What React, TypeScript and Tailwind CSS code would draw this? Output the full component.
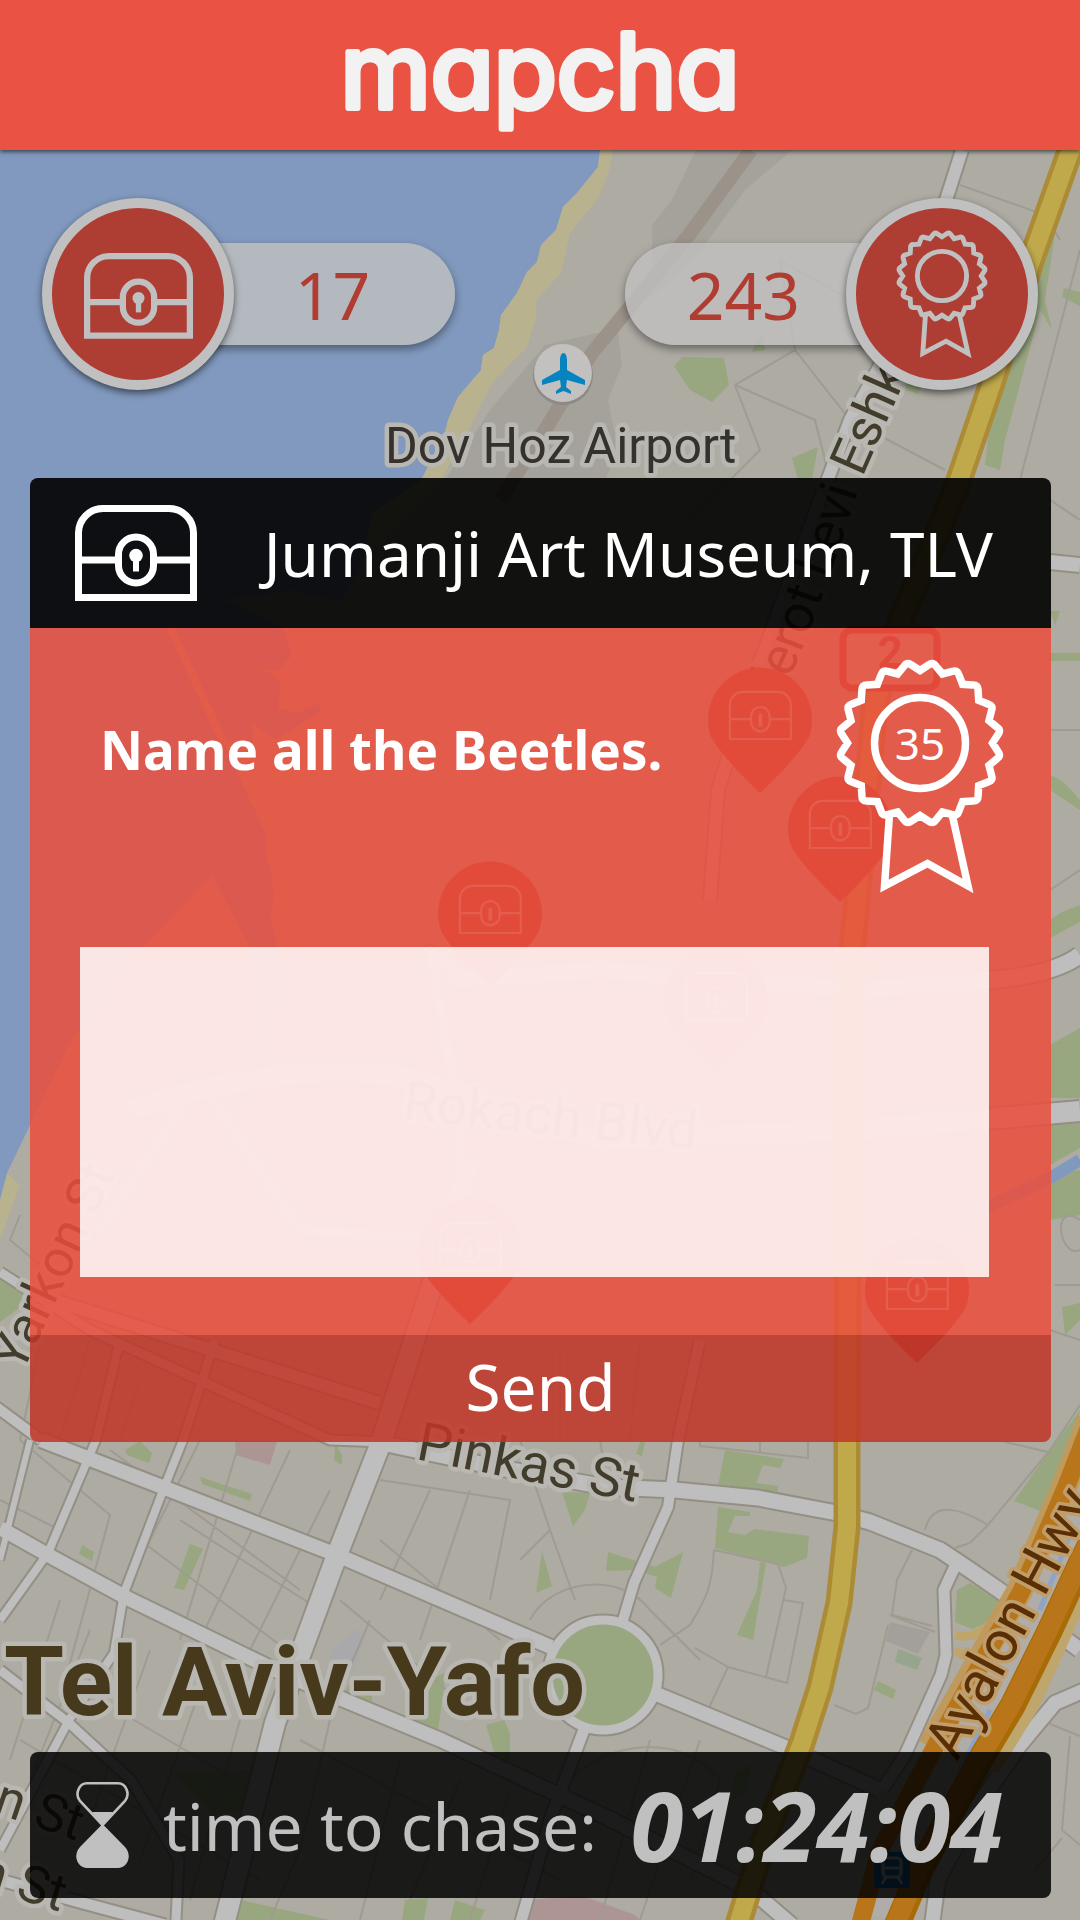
const RED = "#ea5344";

function ChestIcon({ className }: { className?: string }) {
  return (
    <svg viewBox="0 0 122 96" className={className} fill="none" stroke="currentColor" strokeWidth="7" aria-hidden="true">
      <path d="M3.5 92.5V28A24.5 24.5 0 0 1 28 3.5h66A24.5 24.5 0 0 1 118.500 28v64.500z" />
      <path d="M3.500 55H42M80 55h38.500" />
      <rect x="43.500" y="32" width="35" height="46" rx="17.500" />
      <circle cx="61" cy="50.500" r="6.800" fill="currentColor" stroke="none" />
      <path d="M58 54h6v12.500h-6z" fill="currentColor" stroke="none" />
    </svg>
  );
}

const CX = 99;
const CY = 102;
function at(radius: number, degrees: number) {
  const a = (degrees * Math.PI) / 180;
  return `${(CX + radius * Math.sin(a)).toFixed(1)} ${(CY - radius * Math.cos(a)).toFixed(1)}`;
}
const scallops =
  Array.from({ length: 20 }, (_, i) => {
    const s = i * 18;
    return `${i === 0 ? "M" : "L"}${at(72.5, s)}L${at(78.5, s + 6.3)}Q${at(82.5, s + 9)} ${at(78.5, s + 11.7)}`;
  }).join("") + "Z";

function BadgeIcon({ className, weight = 7.5 }: { className?: string; weight?: number }) {
  return (
    <svg viewBox="14 17 170 237" className={className} fill="none" stroke="currentColor" strokeWidth={weight} aria-hidden="true">
      <path d={scallops} />
      <circle cx={CX} cy={CY} r="45.500" />
      <path d="M68.500 173L63.500 245L106.500 222.500L147 245L131 173" />
    </svg>
  );
}

function HourglassIcon({ className }: { className?: string }) {
  return (
    <svg viewBox="0 0 53 86" className={className} fill="currentColor" aria-hidden="true">
      <path
        d="M11 1.300H42C50 1.300 54.500 12 49 19L26.500 43L4 19C-1.500 12 3 1.300 11 1.300Z"
        fill="none"
        stroke="currentColor"
        strokeWidth="2.600"
      />
      <path d="M16 30H37L26.500 43Z" />
      <path d="M26.500 42L49 65C57 74 51 86 42 86H11C2 86 -4 74 4 65Z" />
    </svg>
  );
}

const pins = [
  [760, 719],
  [840, 828],
  [490, 913],
  [716, 1000],
  [470, 1250],
  [917, 1289],
];

const minorStreets =
  "M960 185L1045 215L1060 240M1045 215L1035 260M780 260L850 300L880 350M780 260L795 350L735 385L760 450L690 520M795 350L850 420L945 470M735 385L815 420L830 480M1080 250L1020 480" +
  "M0 1500L60 1530M20 1440L110 1515L60 1700M110 1450L300 1590M200 1440L120 1600M240 1440L180 1640M290 1450L200 1640M330 1490L230 1690M140 1540L300 1660M180 1520L320 1610M60 1600L10 1760M90 1630L30 1780M150 1650L90 1820M200 1690L140 1860M240 1720L190 1900M20 1740L260 1880M100 1700L270 1800" +
  "M380 1480L510 1500L490 1600M430 1490L380 1600M380 1540L500 1640M470 1490L420 1640M340 1600L470 1710M370 1620L340 1690M520 1440L550 1530L520 1560M550 1530L575 1600M530 1620C550 1580 620 1570 650 1610L700 1660M700 1440V1446L808 1458V1440M760 1440V1452M714 1550L778 1564L786 1588L766 1677M783 1600L803 1603L787 1683L728 1667L695 1648M728 1667L708 1710M714 1550C712 1590 705 1600 690 1625L660 1645" +
  "M300 1740L560 1880M330 1720L300 1850L270 1920M400 1760L360 1920M460 1780L410 1900M510 1790L470 1920M560 1790C600 1740 680 1730 720 1780L690 1880M650 1740L600 1920M700 1740L640 1920M912 1550L897 1580L892 1615L932 1626M925 1530C932 1500 960 1508 988 1525L1050 1450L1080 1405M988 1525L970 1543L955 1548M890 1615L935 1632M834 1705L856 1714L868 1708L888 1625" +
  "M20 1215L10 1240L40 1265M1080 1220C1050 1200 1060 1260 1080 1250M1055 1285H1080M1050 730H1080M1050 500L1080 520M1080 870L1050 890M1050 1330L1080 1340M1005 1442L1048 1452M1050 1724L1080 1736M1070 1736L1062 1830L1080 1845M1062 1838L1035 1870" +
  "M50 1300L20 1440M90 1340L60 1440M140 1380L120 1440M600 1440L610 1500M640 1340L630 1440M560 1350V1440";

const streets: [string, number][] = [
  ["M962 150L947 197L905 320L850 420L790 580L750 690L718 790L710 900", 12],
  ["M0 1272L90 1330L330 1440L386 1442", 9],
  ["M31 1293L379 1403", 12],
  ["M41 1440L165 1488L337 1555L551 1647", 14],
  ["M41 1440L-20 1395", 10],
  ["M0 1528L48 1555L127 1598L269 1667L344 1700L441 1740L606 1817L751 1890L792 1925", 14],
  ["M470 1160L440 1260L382 1440L337 1555L275 1723L224 1925", 20],
  ["M120 1340L96 1440L48 1553L0 1620", 8],
  ["M30 1440L0 1560", 6],
  ["M215 1340L183 1440L162 1493L124 1593L114 1653L69 1720L0 1850", 8],
  ["M0 1670L69 1723L131 1780L179 1860L176 1920", 9],
  ["M382 1443L500 1468L606 1487L675 1490L758 1498L837 1513L870 1522L940 1550L970 1570L1006 1595L1080 1650", 15],
  ["M956 1564L944 1590L946 1655L941 1675L905 1755L882 1790", 11],
  ["M700 1340L678 1440L668 1507L634 1583L623 1620", 10],
  ["M654 1693L792 1750L880 1790", 14],
  ["M585 1727L551 1817L520 1925", 11],
  ["M0 1880L83 1903L165 1925", 11],
  ["M1085 1690L1055 1703L1020 1745L975 1810L938 1880L932 1925", 14],
  ["M1050 562L1080 565", 14],
  ["M1080 955C1040 985 960 980 860 990L600 970L450 980", 16],
  ["M1080 1111C1000 1118 920 1125 850 1130L600 1140L420 1080C330 1060 220 1080 130 1110", 20],
  ["M470 980L430 950L460 1120L465 1240L300 1230L200 1080L100 1230", 9],
];

const avenue =
  "M1074 140L1033 255L992 383L959 480L943 520L902 617L875 703L857 900L852 950L848 1130L847 1440L847 1527L839 1603L820 1687L802 1743L764 1840L738 1925";

function MapView() {
  return (
    <svg
      className="absolute inset-0 h-full w-full"
      viewBox="0 0 1080 1920"
      preserveAspectRatio="xMidYMin slice"
      role="img"
      aria-label="Map of Tel Aviv-Yafo"
    >
      <rect width="1080" height="1920" fill="#aeaba3" />
      <path
        d="M0 0H600V150L598 167L577 193L563 207L556 230L541 245L537 262L527 272L517 293L501 315L499 330L494 348L483 355L481 370L458 397L448 420L444 437L421 480L372 513L360 570L340 602L290 590L225 600L282 627L292 655L278 670L233 670L267 671L280 682L278 708L297 713L320 703V712L290 760L267 770V837L265 853L275 887L270 917L278 947L282 990L255 1080H240L262 1000L250 947L212 875L143 947L69 1043L31 1123L7 1173L12 1185L0 1200Z"
        fill="#8199be"
      />
      <path d="M170 627L225 745" fill="none" stroke="#b4b09f" strokeWidth="8" />
      <path d="M222 740L253 745V723L275 740L320 712L300 947H280L267 837Z" fill="#b4b09f" />
      <path
        d="M600 150L598 167L577 193L563 207L556 230L541 245L537 262L527 272L517 293L501 315L499 330L494 348L483 355L481 370L458 397L448 420L444 437L421 480L372 513L365 560L395 530L441 480L475 417L492 383L527 347L536 317L536 300L561 273L570 233L599 197L609 170L613 150Z"
        fill="#b9b28f"
      />
      <path d="M7 1173L20 1185L0 1240V1200Z" fill="#b9b28f" />
      <path d="M696 150L672 200L652 225L652 280L610 330L545 345L490 410L445 480H605L618 450L608 400L622 365L617 325L690 265L745 190L792 150Z" fill="#a5a29c" />
      <path d="M751 150L689 235L592 353L545 430L500 500" fill="none" stroke="#9b9389" strokeWidth="14" />

      <g fill="#98a780">
        <path d="M674 366L682 357L724 358L729 385L712 402L690 390ZM755 343L763 335L765 350L752 352ZM792 458L818 447L812 480H798ZM1080 150L1060 200L1045 300L1052 330L1040 310L1005 440L1000 470L985 465L990 420L1010 350L1060 150ZM905 385L925 380L918 394L906 390Z" />
        <path d="M1064 288L1080 292V306L1062 297ZM1050 611H1060L1055 625ZM1050 653H1080V661H1050ZM1050 775C1065 780 1075 795 1080 800V810L1050 790ZM1050 920L1062 912L1080 905V922L1050 938ZM1080 1028V1098H1050V1045ZM1050 1122L1080 1116V1148L1050 1165ZM1050 1175L1080 1170V1215L1050 1220ZM1062 1307L1080 1303V1320L1065 1335ZM0 1272L30 1300L0 1322Z" />
        <path d="M125 1450L140 1441L152 1453L149 1463L127 1455ZM200 1477L252 1494L250 1501L202 1484ZM82 1545L94 1552L92 1561L79 1554ZM190 1544L203 1549L184 1590L174 1588ZM335 1443L342 1455V1465L334 1460ZM640 1442H645L642 1456L636 1454ZM725 1450L784 1459L780 1468L763 1465L756 1483L778 1486V1492L718 1486ZM718 1507L750 1512V1516L735 1516L728 1532L745 1535L755 1529L809 1536L807 1558L784 1567L715 1548ZM760 1562L766 1563L753 1640L737 1635L757 1590ZM562 1492L590 1493L585 1510L573 1526ZM542 1551L552 1586L536 1593ZM608 1552L655 1567L683 1552L671 1598L655 1588L657 1577L636 1570L606 1571ZM957 1590L970 1583L999 1601L990 1622L972 1629L955 1622Z" />
        <path d="M1080 1410L1070 1470L1043 1512L1014 1501L1050 1450ZM878 1681L896 1690L893 1699L874 1690ZM355 1675L372 1680V1708L338 1702ZM430 1680L446 1672L436 1745L413 1725ZM486 1725L504 1720L510 1733V1772H500ZM240 1900L330 1920H235ZM405 1900L428 1898L424 1920H402ZM455 1900L485 1910L480 1920H450ZM175 1772L267 1770V1805L212 1815ZM735 1772L752 1765L745 1795L730 1800ZM560 1470L578 1475L572 1485Z" />
      </g>
      <path d="M898 1649L922 1658L917 1670L895 1662Z" fill="#96a58d" />
      <g fill="#a9a8aa">
        <path d="M342 1640L355 1630L366 1635L358 1660L350 1675L328 1668L332 1650Z" />
        <path d="M890 1622L930 1632L918 1654L886 1641Z" fill="#a3a09b" />
        <path d="M1035 1690L1042 1660L1020 1715L1015 1730Z" />
      </g>
      <path d="M235 1440L277 1441L270 1465L236 1455ZM530 1900L580 1895L635 1915L640 1920H520Z" fill="#ad9594" />
      <path d="M1080 1160L1052 1177L960 1220" fill="none" stroke="#8199be" strokeWidth="12" />

      <path d={minorStreets} fill="none" stroke="#9f9b93" strokeWidth="2" />
      <g fill="none" stroke="#948f85" strokeLinejoin="round">
        {streets.map(([d, w]) => (
          <path key={d} d={d} strokeWidth={w + 4} />
        ))}
        <circle cx="603" cy="1675" r="55" strokeWidth="13" />
      </g>
      <g fill="none" stroke="#bebebe" strokeLinejoin="round">
        {streets.map(([d, w]) => (
          <path key={d} d={d} strokeWidth={w} />
        ))}
        <circle cx="603" cy="1675" r="55" strokeWidth="9" fill="#98a780" />
      </g>

      <g fill="none" strokeLinejoin="round">
        <path d={avenue} stroke="#ac8b37" strokeWidth="27" />
        <path d={avenue} stroke="#bfa94b" strokeWidth="18" />
        <path d="M955 1635C975 1640 985 1630 1005 1610M955 1650L980 1665" stroke="#c0a56a" strokeWidth="9" />
        <path d="M1085 1560L1058 1627L1025 1700L985 1765" stroke="#bfa66c" strokeWidth="32" />
        <path d="M1082 1500L1045 1600L960 1755L885 1920" stroke="#b0aca8" strokeWidth="30" />
        <path d="M1072 1530L1040 1610M990 1710L960 1770" stroke="#8fa3c4" strokeWidth="5" />
        <path d="M1090 1420L1064 1487L1020 1590L930 1747" stroke="#bf9a5c" strokeWidth="26" />
        <path d="M1090 1545L1080 1565L1050 1630L1013 1705L983 1755L920 1870L897 1925" stroke="#a96b06" strokeWidth="26" />
        <path d="M1088 1545L1078 1565L1048 1630L1011 1705L981 1755L918 1870L895 1925" stroke="#b87519" strokeWidth="20" />
        <path d="M1092 1420L1066 1487L1022 1590L935 1747L880 1850L860 1925" stroke="#b87519" strokeWidth="18" />
      </g>

      <g>
        <rect x="843" y="630" width="94" height="58" rx="9" fill="#c0beb9" stroke="#b2302a" strokeWidth="7" />
        <text x="890" y="668" textAnchor="middle" fontSize="44" fontWeight="700" fill="#b2302a" fontFamily="Roboto, sans-serif">
          2
        </text>
      </g>

      <circle cx="563" cy="375" r="30" fill="#8d8a85" />
      <circle cx="563" cy="373" r="29" fill="#c2c1bf" />
      <path d="M563.500 353C566 353 567 357 567 360V370L585 380V385L567 380L566 387L571 391V394L563.500 391L556 394V391L561 387L560 380L542 385V380L560 370V360C560 357 561 353 563.500 353Z" fill="#0784bf" />

      <rect x="874" y="1852" width="36" height="36" rx="4" fill="#0b6fae" />
      <rect x="883" y="1858" width="18" height="19" rx="4" fill="none" stroke="#c0c0c0" strokeWidth="3" />
      <path d="M883 1868H901M886 1877L882 1884M898 1877L902 1884" stroke="#c0c0c0" strokeWidth="3" />

      <defs>
        <path id="levi-eshkol" d="M764 735L800 655C825 590 843 540 862 478L903 385L960 250" />
      </defs>
      <g fontFamily="Roboto, sans-serif" fill="#423c2c" stroke="#b9b7b1" strokeWidth="9" strokeLinejoin="round" paintOrder="stroke">
        <text x="385" y="463" fontSize="50" fill="#35322d">
          Dov Hoz Airport
        </text>
        <text x="4" y="1715" fontSize="97" fontWeight="700" fill="#46391c">
          Tel Aviv-Yafo
        </text>
        <text transform="translate(415 1459) rotate(11)" fontSize="54">
          Pinkas St
        </text>
        <text transform="translate(402 1119) rotate(6)" fontSize="54">
          Rokach Blvd
        </text>
        <text transform="translate(22 1374) rotate(-65)" fontSize="52">
          Yarkon St
        </text>
        <text transform="translate(-36 1802) rotate(19)" fontSize="52">
          on St
        </text>
        <text transform="translate(-54 1877) rotate(17)" fontSize="52">
          on St
        </text>
        <text transform="translate(957 1762) rotate(-62)" fontSize="57" fill="#5a2f06" stroke="#c09e6c" strokeWidth="7">
          Ayalon Hwy
        </text>
        <text fontSize="53">
          <textPath href="#levi-eshkol">Sderot Levi Eshkol</textPath>
        </text>
      </g>

      {pins.map(([x, y]) => (
        <g key={`${x}-${y}`} transform={`translate(${x} ${y})`}>
          <path d="M-49 18A52 52 0 1 1 49 18Q38 38 0 74Q-38 38 -49 18Z" fill="#b23a30" />
          <g transform="translate(-32 -29) scale(0.53)" fill="none" stroke="#c0c0c0" strokeWidth="4">
            <path d="M3.500 92.500V28A24.500 24.500 0 0 1 28 3.500h66A24.500 24.500 0 0 1 118.500 28v64.500z" />
            <path d="M3.500 55H42M80 55h38.500" />
            <rect x="43.500" y="32" width="35" height="46" rx="17.500" />
            <path d="M61 48V66" strokeWidth="7" strokeLinecap="round" />
          </g>
        </g>
      ))}
    </svg>
  );
}

function Logo() {
  return (
    <h1 className="flex">
      <svg viewBox="0 0 420 120" className="h-[120px] w-[420px] overflow-visible" role="img" aria-label="mapcha">
        <text
          x="210"
          y="93"
          textAnchor="middle"
          fontFamily="Inter, sans-serif"
          fontSize="103"
          fontWeight="400"
          fill="#f2f2f2"
          stroke="#f2f2f2"
          strokeWidth="6"
          strokeLinejoin="round"
          style={{ fontFeatureSettings: '"cv11"' }}
        >
          mapcha
        </text>
      </svg>
    </h1>
  );
}

const circle =
  "relative z-10 flex size-[192px] shrink-0 items-center justify-center rounded-full border-[10px] border-[#c0c0c0] bg-[#ae3d33] text-[#c0c0c0] shadow-[0_3px_7px_rgba(0,0,0,0.55)]";
const pill =
  "flex h-[102px] w-[245px] items-center justify-center bg-[#c0c0c0]/80 text-[66px] leading-none text-[#b03c32] shadow-[0_4px_8px_rgba(0,0,0,0.4)]";

export default function App() {
  return (
    <div className="relative flex min-h-screen flex-col overflow-hidden font-['Noto_Sans',sans-serif]">
      <MapView />

      <header
        className="relative flex h-[150px] items-center justify-center shadow-[0_2px_4px_rgba(0,0,0,0.55)]"
        style={{ backgroundColor: RED }}
      >
        <Logo />
      </header>

      <main className="relative flex grow flex-col">
        <section className="flex justify-between px-[42px] pt-12" aria-label="Score">
          <div className="flex items-center">
            <div className={circle}>
              <ChestIcon className="mt-1 w-[109px]" />
            </div>
            <span className={`${pill} -ml-6 rounded-r-full`}>17</span>
          </div>
          <div className="flex items-center">
            <span className={`${pill} -mr-6 rounded-l-full pr-2`}>243</span>
            <div className={circle}>
              <BadgeIcon className="w-[92px]" weight={9} />
            </div>
          </div>
        </section>

        <form className="mt-[88px] mr-[29px] ml-[30px] overflow-hidden rounded-lg text-white" onSubmit={(e) => e.preventDefault()}>
          <div className="flex h-[150px] items-center justify-between bg-black/90 pr-[58px] pl-[45px]">
            <ChestIcon className="w-[122px]" />
            <h2 className="text-[62px] leading-none whitespace-nowrap">Jumanji Art Museum, TLV</h2>
          </div>

          <div className="bg-[#ea4e3c]/86 pt-[30px] pr-[62px] pb-[58px] pl-[50px]">
            <div className="flex items-start justify-between pl-5">
              <label htmlFor="answer" className="pt-[60px] text-[53px] leading-[64px] font-bold whitespace-nowrap">
                Name all the Beetles.
              </label>
              <div className="relative -mr-4">
                <BadgeIcon className="w-[170px]" />
                <span className="absolute inset-x-0 top-[60px] text-center text-[44px] leading-[50px]">35</span>
              </div>
            </div>
            <textarea
              id="answer"
              className="mt-[52px] block h-[330px] w-full resize-none rounded-none bg-white/85 p-6 text-[40px] text-[#ae3d33] outline-none"
            />
          </div>

          <button type="submit" className="block h-[107px] w-full bg-[#c03628]/86 pb-1 text-[64px] leading-none">
            Send
          </button>
        </form>

        <section className="mt-auto mr-[29px] mb-[22px] ml-[30px] flex h-[146px] items-center justify-between rounded-lg bg-black/85 pr-12 pl-[46px] text-[#c0c0c0]">
          <div className="flex items-center gap-[34px]">
            <HourglassIcon className="w-[53px]" />
            <span className="text-[66px] leading-none whitespace-nowrap">time to chase:</span>
          </div>
          <time className="text-[96px] leading-none font-bold whitespace-nowrap italic">01:24:04</time>
        </section>
      </main>
    </div>
  );
}
